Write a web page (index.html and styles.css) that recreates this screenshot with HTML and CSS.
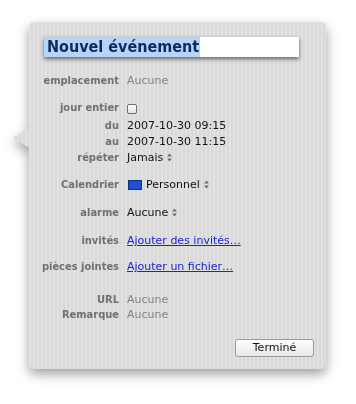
FILE: index.html
```html
<!DOCTYPE html>
<html lang="fr">
<head>
<meta charset="utf-8">
<title>Nouvel événement</title>
<link rel="stylesheet" href="styles.css">
</head>
<body>
<div class="wrap">
  <div class="panel">
    <div class="pointer"></div>
    <div class="title-field"><span class="title-text">Nouvel événement</span></div>

    <div class="row r-empl"><span class="lbl">emplacement</span><span class="val muted">Aucune</span></div>

    <div class="row r-jour"><span class="lbl">jour entier</span><span class="val"><span class="checkbox"></span></span></div>
    <div class="row"><span class="lbl">du</span><span class="val">2007-10-30 09:15</span></div>
    <div class="row"><span class="lbl">au</span><span class="val">2007-10-30 11:15</span></div>
    <div class="row"><span class="lbl">répéter</span><span class="val">Jamais <svg class="step" width="5" height="9" viewBox="0 0 5 9"><path d="M2.5 0.5 L4.8 3.6 L0.2 3.6 Z M2.5 8.5 L4.8 5.4 L0.2 5.4 Z" fill="#6a6a6a"/></svg></span></div>

    <div class="row r-cal"><span class="lbl">Calendrier</span><span class="val"><span class="swatch"></span>Personnel <svg class="step" width="5" height="9" viewBox="0 0 5 9"><path d="M2.5 0.5 L4.8 3.6 L0.2 3.6 Z M2.5 8.5 L4.8 5.4 L0.2 5.4 Z" fill="#6a6a6a"/></svg></span></div>

    <div class="row r-alarm"><span class="lbl">alarme</span><span class="val">Aucune <svg class="step" width="5" height="9" viewBox="0 0 5 9"><path d="M2.5 0.5 L4.8 3.6 L0.2 3.6 Z M2.5 8.5 L4.8 5.4 L0.2 5.4 Z" fill="#6a6a6a"/></svg></span></div>

    <div class="row r-inv"><span class="lbl">invités</span><span class="val"><a class="link" href="#">Ajouter des invités…</a></span></div>

    <div class="row r-pj"><span class="lbl">pièces jointes</span><span class="val"><a class="link" href="#">Ajouter un fichier…</a></span></div>

    <div class="row small r-url"><span class="lbl">URL</span><span class="val muted">Aucune</span></div>
    <div class="row small"><span class="lbl">Remarque</span><span class="val muted">Aucune</span></div>

    <button class="btn" type="button">Terminé</button>
  </div>
</div>
</body>
</html>
```

FILE: styles.css
```css
html, body {
  margin: 0;
  padding: 0;
  background: #ffffff;
}

body {
  width: 356px;
  height: 404px;
  overflow: hidden;
  font-family: "DejaVu Sans", "Noto Sans", sans-serif;
}

.wrap {
  padding: 22px 0 0 29px;
  filter: drop-shadow(0 5px 6px rgba(0, 0, 0, 0.38));
}

.panel {
  position: relative;
  width: 297px;
  box-sizing: border-box;
  padding: 15px 0 12px 0;
  display: flex;
  flex-direction: column;
  border-radius: 5px;
  background-color: #dedede;
  background-image: repeating-linear-gradient(90deg, #e2e2e2 0 2px, #d9d9d9 2px 4px);
}

.pointer {
  position: absolute;
  left: -16px;
  top: 106px;
  width: 17px;
  height: 20px;
  background-color: #dedede;
  background-image: repeating-linear-gradient(90deg, #e2e2e2 0 2px, #d9d9d9 2px 4px);
  clip-path: polygon(100% 0, 0 50%, 100% 100%);
}

.title-field {
  margin-left: 15px;
  width: 255px;
  height: 20px;
  background: #ffffff;
  box-shadow: 0 2px 4px rgba(0, 0, 0, 0.55);
}

.title-text {
  display: inline-block;
  height: 20px;
  line-height: 20px;
  padding: 0 1px 0 3px;
  background: #b6d4f8;
  color: #0c2a5c;
  font-family: "DejaVu Sans Condensed", "DejaVu Sans", sans-serif;
  font-stretch: condensed;
  font-weight: bold;
  font-size: 16px;
}

.row {
  display: grid;
  grid-template-columns: 90px auto;
  column-gap: 8px;
  line-height: 16px;
  height: 16px;
  font-size: 11px;
}

.row.small {
  line-height: 15px;
  height: 15px;
}

.lbl {
  text-align: right;
  white-space: nowrap;
  color: #707070;
  font-family: "DejaVu Sans Condensed", "DejaVu Sans", sans-serif;
  font-stretch: condensed;
  font-weight: bold;
  font-size: 11px;
}

.val {
  color: #111111;
  white-space: nowrap;
  display: flex;
  align-items: center;
}

.val.muted {
  color: #838383;
}

.r-empl { margin-top: 15.7px; }
.r-jour { margin-top: 11.6px; height: 17.4px; }
.r-cal { margin-top: 11.3px; }
.r-alarm { margin-top: 11.7px; }
.r-inv { margin-top: 12.3px; }
.r-pj { margin-top: 10.3px; }
.r-url { margin-top: 16.5px; }

.checkbox {
  display: inline-block;
  width: 8px;
  height: 8px;
  border: 1px solid #6e6e6e;
  border-radius: 2px;
  background: linear-gradient(#ffffff, #e4e4e4);
}

.swatch {
  display: inline-block;
  width: 12px;
  height: 8px;
  margin: 0 4px 0 1px;
  background: #1f4fd0;
  border: 1px solid #0d2f86;
}

.step {
  margin-left: 4px;
}

.link {
  color: #1d22d2;
  text-decoration: underline;
}

.btn {
  align-self: flex-end;
  margin: 17.2px 12px 0 0;
  width: 79px;
  height: 18px;
  padding: 0;
  border: 1px solid #9a9a9a;
  border-radius: 3px;
  background: linear-gradient(#ffffff, #f3f3f3 50%, #e8e8e8);
  color: #111111;
  font-family: "DejaVu Sans", sans-serif;
  font-size: 11px;
  line-height: 16px;
}
```
